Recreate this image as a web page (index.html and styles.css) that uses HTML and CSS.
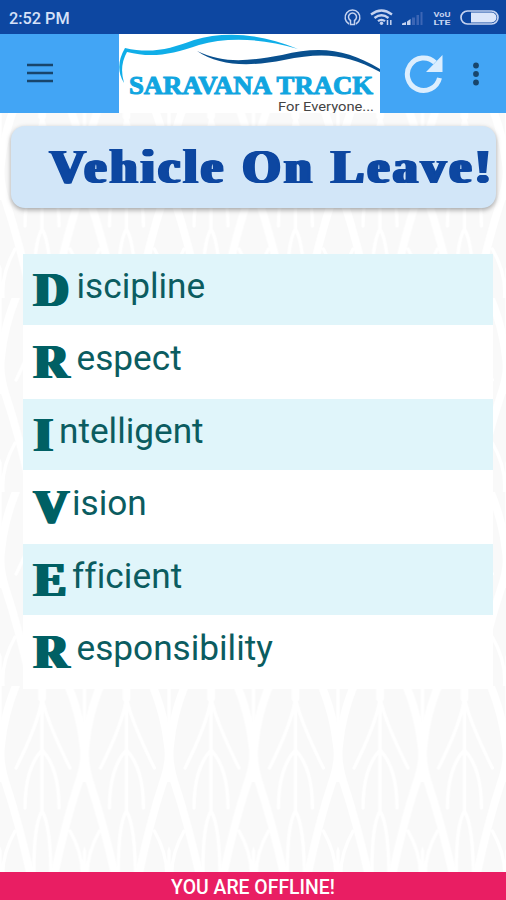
FILE: index.html
```html
<!DOCTYPE html>
<html lang="en">
<head>
    <meta charset="UTF-8">
    <meta name="viewport" content="width=device-width, initial-scale=1.0">
    <title>Saravana Track</title>
    <link rel="stylesheet" href="styles.css">
</head>
<body>
    <!-- Leaf pattern behind the whole page -->
    <svg class="leaves" width="506" height="900" aria-hidden="true">
        <defs>
            <pattern id="leaf" width="84.5" height="194" patternUnits="userSpaceOnUse" patternTransform="translate(0 686)">
                <rect width="84.5" height="194" fill="#f9f9f9"/>
                <g fill="none" stroke="#fff" stroke-linecap="round" stroke-linejoin="round">
                    <path stroke-width="8" d="M19-8Q4 26 1 60M65-8Q80 26 83.500 60M1 60Q-1 75 5 95Q20 140 33 200M83.500 60Q86 75 79 95Q64 140 52 200M0 40V92M84.500 40V92M42-10V12"/>
                    <path stroke-width="3.5" d="M42 5V125M42 12Q39 36 16 82M42 12Q47 36 70 82M42 64Q25 82 25 122M42 64Q59 82 59 122M42 125Q33 140 34 194M42 125Q51 140 51 194M0-5V44M84.5-5V44M3 194Q1 170 15 145M82 194Q84 170 70 145M0 165L-8 145M0 165V194M84.5 165L92 145M84.5 165V194"/>
                </g>
            </pattern>
        </defs>
        <rect width="506" height="900" fill="url(#leaf)"/>
    </svg>

    <div class="screen">
        <div class="status-bar">
            <span class="time">2:52 PM</span>
            <svg class="status-icons" width="166" height="34" viewBox="340 0 166 34">
                <g fill="none" stroke="#c5d3f0" stroke-width="1.5">
                    <path d="M349 24A7.4 7.4 0 1 1 356 24"/>
                    <path d="M350.500 20.500A4 4 0 1 1 354.500 20.500V24.500H350.500Z"/>
                    <path stroke-width="2.300" d="M371 14.500Q381.500 6.500 392 14.500M374.500 18Q381.500 12.500 388.500 18M378 21.200Q381.500 18.500 385 21.200"/>
                    <path d="M387.500 20V25M390.800 20V25"/>
                </g>
                <circle cx="381.500" cy="23.300" r="1.700" fill="#c5d3f0"/>
                <path fill="#c5d3f0" d="M402 25V23.500L406 22V25ZM407 25V21.500L410.500 19V25Z"/>
                <path fill="#3c66b5" d="M412 25V17.500H415V25ZM416.500 25V15H419V25ZM420.500 25V12H422.500V25Z"/>
                <text x="433.500" y="16.500" textLength="17" lengthAdjust="spacingAndGlyphs">VoU</text>
                <text x="433.500" y="25" textLength="17" lengthAdjust="spacingAndGlyphs">LTE</text>
                <rect x="461" y="11" width="37" height="13" rx="6.500" fill="none" stroke="#c5d3f0" stroke-width="1.700"/>
                <path fill="#dbe6fa" d="M471 12.500H491.500A5 5 0 0 1 491.500 22.500H471Z"/>
            </svg>
        </div>

        <div class="toolbar">
            <div class="menu">
                <svg width="26" height="20" viewBox="0 0 26 20" stroke="#18456b" stroke-width="2.400">
                    <path d="M0 2H26M0 10H26M0 18H26"/>
                </svg>
            </div>
            <svg class="logo" width="261" height="79" viewBox="119 34 261 79">
                <rect x="119" y="34" width="261" height="79" fill="#fff"/>
                <path fill="#10aee8" d="M125 48C151 54 170 49 194 40C224 31 260 33 298 49C262 38 226 37 199 45C171 55 151 58 127 52Q119 66 124 83Q114 67 125 48Z"/>
                <path fill="#09508f" d="M197 51C224 64 249 61 282 55C322 45 348 50 380 69V72C347 54 323 52 284 60C249 67 219 66 197 51Z"/>
                <text class="logo-name" x="129" y="93.500" textLength="244" lengthAdjust="spacingAndGlyphs">SARAVANA TRACK</text>
                <text class="logo-tag" x="278" y="110.500" textLength="96" lengthAdjust="spacingAndGlyphs">For Everyone...</text>
            </svg>
            <div class="actions">
                <svg width="40" height="40" viewBox="0 0 40 40">
                    <path fill="none" stroke="#dceefe" stroke-width="5" d="M35.500 24A16.300 16.300 0 1 1 31 8.500"/>
                    <path fill="#dceefe" d="M38.500 1V18H22Z"/>
                </svg>
                <svg width="6" height="24" viewBox="0 0 6 24" fill="#18456b">
                    <circle cx="3" cy="3.500" r="2.900"/>
                    <circle cx="3" cy="12" r="2.900"/>
                    <circle cx="3" cy="20.500" r="2.900"/>
                </svg>
            </div>
        </div>

        <div class="title-card">
            <h1>Vehicle On Leave!</h1>
        </div>

        <ul class="driver">
            <li><b class="d">D</b><span>iscipline</span></li>
            <li><b class="r">R</b><span>espect</span></li>
            <li><b class="i">I</b><span>ntelligent</span></li>
            <li><b class="v">V</b><span>ision</span></li>
            <li><b class="e">E</b><span>fficient</span></li>
            <li><b class="r">R</b><span>esponsibility</span></li>
        </ul>

        <div class="offline">YOU ARE OFFLINE!</div>
    </div>
</body>
</html>
```
FILE: styles.css
```css
* {
    box-sizing: border-box;
}

body {
    margin: 0;
    background: #fff;
    font-family: Roboto, sans-serif;
}

/* Background */
.leaves {
    position: absolute;
    top: 0;
    left: 0;
    z-index: -1;
}

.screen {
    display: flex;
    flex-direction: column;
    height: 900px;
}

/* Status bar */
.status-bar {
    display: flex;
    justify-content: space-between;
    align-items: center;
    height: 34px;
    padding-left: 9px;
    background: #0d47a1;
}

.time {
    color: #d5e1f8;
    font-size: 16.3px;
    font-weight: 500;
    padding-top: 2px;
}

.status-icons text {
    fill: #c5d3f0;
    font-size: 7.5px;
    font-weight: bold;
}

/* Toolbar */
.toolbar {
    display: flex;
    height: 79px;
    background: #42a5f5;
}

.menu {
    width: 119px;
    padding: 29px 0 0 27px;
}

.menu svg,
.logo,
.actions svg {
    display: block;
}

.logo-name {
    fill: #10a5e0;
    stroke: #10a5e0;
    stroke-width: 1px;
    font-family: "Liberation Serif", serif;
    font-size: 25.5px;
    font-weight: bold;
}

.logo-tag {
    fill: #444;
    font-family: Roboto, sans-serif;
    font-size: 13px;
}

.actions {
    display: flex;
    align-items: center;
    gap: 29px;
    padding-left: 24px;
}

/* Heading card */
.title-card {
    height: 82px;
    margin: 13px 10px 0 11px;
    padding-left: 38px;
    border-radius: 14px;
    background: #d2e6f8;
    box-shadow: 0 2px 5px rgba(0, 0, 0, 0.35);
}

/* the side shadows fatten the stems and leave the hairlines thin */
h1 {
    margin: 0;
    color: #0d47a1;
    font-family: "Liberation Serif", serif;
    font-size: 49px;
    line-height: 81px;
    letter-spacing: 3.7px;
    white-space: nowrap;
    text-shadow: -1px 0, 1px 0, 2px 0, 3px 0;
}

/* D-R-I-V-E-R list */
.driver {
    list-style: none;
    margin: 45.5px 13px 0 23px;
    padding: 0;
}

.driver li {
    display: flex;
    height: 72.5px;
    padding-left: 9px;
    color: #006064;
    background: #fff;
}

.driver li:nth-child(odd) {
    background: linear-gradient(#e0f5fa 71.5px, #fff 71.5px);
}

.driver b {
    font-family: "Liberation Serif", serif;
    font-size: 48px;
    line-height: 71px;
    text-shadow: 1px 0, 2px 0, 3px 0, 4px 0;
}

.driver span {
    font-size: 35.2px;
    line-height: 64px;
    color: #0b5c60;
}

.d, .r { width: 44.5px; }
.i { width: 27px; }
.v { width: 40px; }
.e { width: 40px; }

.e + span {
    letter-spacing: 0.1px;
}

/* Connection notice */
.offline {
    height: 28px;
    margin-top: auto;
    background: #e91e63;
    color: #fff;
    font-size: 19.4px;
    font-weight: 500;
    line-height: 31px;
    text-align: center;
}
```
